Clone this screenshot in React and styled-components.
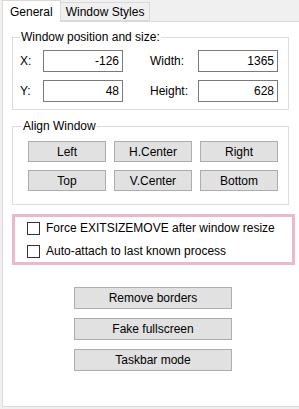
import React from 'react';
import styled, { createGlobalStyle } from 'styled-components';

const Global = createGlobalStyle`
  html, body { margin: 0; padding: 0; background: #f0f0f0; }
  body { font-family: "Liberation Sans", Arial, sans-serif; font-size: 12px; color: #000; }
  * { box-sizing: border-box; }
`;

const Window = styled.div`
  width: 299px;
  height: 409px;
  overflow: hidden;
  background: #f0f0f0;
  padding-left: 2px;
  display: flex;
  flex-direction: column;
`;

const TabStrip = styled.div`
  display: flex;
  align-items: flex-end;
  height: 21px;
  flex: none;
  position: relative;
  z-index: 1;
`;

const Tab = styled.div`
  height: ${p => (p.$active ? '22px' : '19px')};
  margin-bottom: ${p => (p.$active ? '-1px' : '0')};
  margin-left: ${p => (p.$active ? '0' : '-1px')};
  padding: 0 ${p => (p.$active ? '7px' : '5px')};
  background: ${p => (p.$active ? '#fff' : '#f0f0f0')};
  border: 1px solid #d9d9d9;
  border-bottom: ${p => (p.$active ? 'none' : '1px solid #d9d9d9')};
  display: flex;
  align-items: center;
  white-space: nowrap;
  line-height: 14px;
`;

const Panel = styled.div`
  flex: none;
  width: 320px;
  height: 386px;
  background: #fff;
  border: 1px solid #d9d9d9;
  display: flex;
  flex-direction: column;
  align-items: flex-start;
`;

const Group = styled.fieldset`
  margin: ${p => p.$mt}px 0 0 9px;
  width: 277px;
  border: 1px solid #dcdcdc;
  padding: ${p => p.$pad};
  min-width: 0;
`;

const Legend = styled.legend`
  padding: 0 1px;
  margin-left: ${p => p.$ml || 0}px;
  line-height: 14px;
  font-size: 12px;
`;

const FieldGrid = styled.div`
  display: grid;
  grid-template-columns: 23px 80px 27px 48px 80px;
  grid-auto-rows: 22px;
  row-gap: 8px;
  align-items: center;
`;

const FieldLabel = styled.span`
  line-height: 14px;
`;

const NumBox = styled.div`
  width: 80px;
  height: 22px;
  border: 1px solid #7a7a7a;
  background: #fff;
  display: flex;
  align-items: center;
  justify-content: flex-end;
  padding-right: 3px;
`;

const ButtonGrid = styled.div`
  display: grid;
  grid-template-columns: repeat(3, 78px);
  grid-auto-rows: 21px;
  gap: 8px;
`;

const Button = styled.div`
  width: ${p => p.$w || 78}px;
  height: ${p => p.$h || 21}px;
  background: #e1e1e1;
  border: 1px solid #adadad;
  display: flex;
  align-items: center;
  justify-content: center;
  white-space: nowrap;
`;

const Highlight = styled.div`
  margin: 9px 0 0 9px;
  width: 283px;
  border: 3px solid #ecb8cc;
  padding: 2px 0 1px 12px;
  display: flex;
  flex-direction: column;
  gap: 4px;
`;

const CheckRow = styled.div`
  height: 19px;
  display: flex;
  align-items: flex-start;
  gap: 6px;
  white-space: nowrap;
`;

const Box = styled.span`
  width: 13px;
  height: 13px;
  margin-top: 3px;
  border: 1px solid #333;
  background: #fff;
  flex: none;
`;

const CheckText = styled.span`
  line-height: 18px;
`;

const ActionList = styled.div`
  margin: 22px 0 0 71px;
  display: flex;
  flex-direction: column;
  gap: 9px;
`;

export default function App() {
  return (
    <>
      <Global />
      <Window>
        <TabStrip>
          <Tab $active>General</Tab>
          <Tab>Window Styles</Tab>
        </TabStrip>
        <Panel>
          <Group $mt={8} $pad="6px 10px 7px 7px">
            <Legend>Window position and size:</Legend>
            <FieldGrid>
              <FieldLabel>X:</FieldLabel>
              <NumBox>-126</NumBox>
              <span />
              <FieldLabel>Width:</FieldLabel>
              <NumBox>1365</NumBox>
              <FieldLabel>Y:</FieldLabel>
              <NumBox>48</NumBox>
              <span />
              <FieldLabel>Height:</FieldLabel>
              <NumBox>628</NumBox>
            </FieldGrid>
          </Group>
          <Group $mt={9} $pad="8px 10px 13px 15px">
            <Legend $ml={-6}>Align Window</Legend>
            <ButtonGrid>
              <Button>Left</Button>
              <Button>H.Center</Button>
              <Button>Right</Button>
              <Button>Top</Button>
              <Button>V.Center</Button>
              <Button>Bottom</Button>
            </ButtonGrid>
          </Group>
          <Highlight>
            <CheckRow>
              <Box />
              <CheckText>Force EXITSIZEMOVE after window resize</CheckText>
            </CheckRow>
            <CheckRow>
              <Box />
              <CheckText>Auto-attach to last known process</CheckText>
            </CheckRow>
          </Highlight>
          <ActionList>
            <Button $w={158} $h={22}>Remove borders</Button>
            <Button $w={158} $h={22}>Fake fullscreen</Button>
            <Button $w={158} $h={22}>Taskbar mode</Button>
          </ActionList>
        </Panel>
      </Window>
    </>
  );
}
